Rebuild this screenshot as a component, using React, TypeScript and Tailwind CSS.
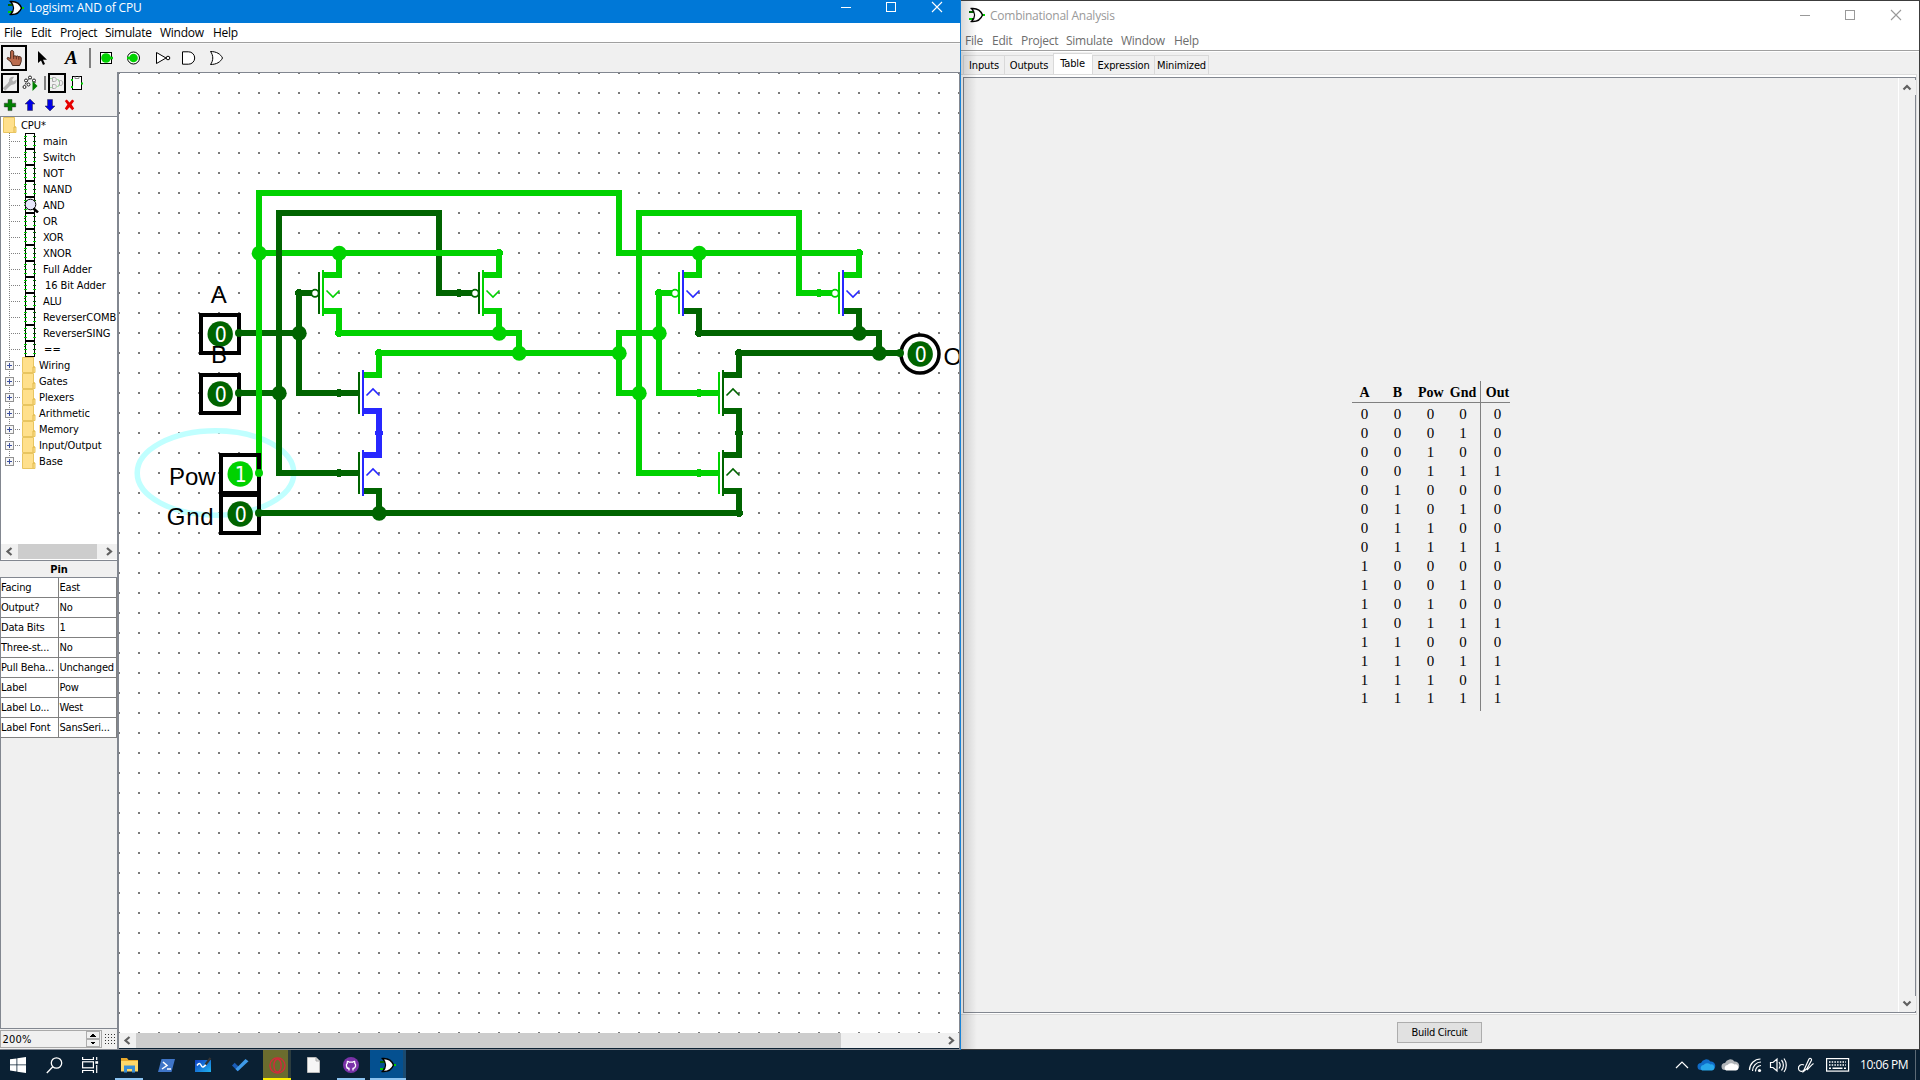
import React from "react";

const LIGHT = "#00d200";
const DARK = "#006400";
const BLUE = "#2828ff";

const UI = "font-['DejaVu_Sans_Condensed','DejaVu_Sans',sans-serif] text-[11px]";
const SEGOE = "font-['Open_Sans',sans-serif] text-[12px]";

/* ---------- shared pieces ---------- */

function LogisimIcon({ fill }: { fill: string }) {
  return (
    <svg width="18" height="16" viewBox="0 0 18 16" className="shrink-0">
      <path d="M1 5h5M1 12h5" stroke={DARK} strokeWidth="2" />
      <path d="M1 12h3M14 8h3" stroke={LIGHT} strokeWidth="2" />
      <path d="M3.5 1.5C10 1 13 4 14.5 8C13 12 10 15 3.5 14.5C7.5 10.5 7.5 5.5 3.5 1.5Z" fill={fill} stroke="#000" strokeWidth="1.4" />
    </svg>
  );
}

function WindowControls({ color }: { color: string }) {
  return (
    <svg width="102" height="12" viewBox="0 0 102 12" fill="none" stroke={color} shapeRendering="crispEdges">
      <path d="M0 6.5h10" />
      <rect x="45.5" y="1.5" width="9" height="9" />
      <path d="M91 1l10 10M101 1l-10 10" shapeRendering="auto" strokeWidth="1.1" />
    </svg>
  );
}

function MenuBar() {
  return (
    <>
      <span className="w-[27px]">File</span>
      <span className="w-[29px]">Edit</span>
      <span className="w-[45px]">Project</span>
      <span className="w-[55px]">Simulate</span>
      <span className="w-[53px]">Window</span>
      <span>Help</span>
    </>
  );
}

function Chevron({ dir }: { dir: "left" | "right" | "up" | "down" }) {
  const d = {
    left: "M10.5 4L6.5 7.5L10.5 11",
    right: "M7 4L11 7.5L7 11",
    up: "M4.5 9.5L8 6L11.5 9.5",
    down: "M4.5 5.5L8 9L11.5 5.5",
  }[dir];
  return (
    <svg width="17" height="15" viewBox="0 0 17 15" className="shrink-0 bg-[#f0f0f0]">
      <path d={d} fill="none" stroke="#606060" strokeWidth="2.2" />
    </svg>
  );
}

/* ---------- toolbars ---------- */

function MainToolbar() {
  return (
    <div className="flex h-7 items-center bg-[#f0f0f0] pl-px">
      <div className="flex h-[26px] w-[26px] items-center justify-center border-2 border-black">
        <svg width="17" height="18" viewBox="0 0 17 18">
          <path d="M6 1.5c1.3 0 1.7 1 1.7 2v4l1-.8 1.6.6 1-.4 1.5.8 1-.2 1.4 1v4l-1.5 4H6.5L5 13 1 9.8 1.6 8.4l3 1V3c0-1 .4-1.500 1.400-1.500Z" fill="#bb6c4e" stroke="#3c1c10" strokeWidth=".9" />
          <path d="M7.700 7v3M10.300 7.300v3M12.800 7.700v3" stroke="#3c1c10" strokeWidth=".8" />
        </svg>
      </div>
      <svg width="13" height="18" viewBox="0 0 13 18" className="ml-[9px]">
        <path d="M2 2v12l3-2.500 2 4.500 2-.9-2-4.300h4Z" fill="#000" />
      </svg>
      <span className="ml-[16px] w-[21px] font-['Liberation_Serif',serif] text-[19px] font-bold italic leading-[28px]">A</span>
      <span className="ml-[3px] h-5 w-[2px] bg-[#808080]" />
      <svg width="140" height="18" viewBox="91 49 140 18" fill="none" stroke="#000">
        <rect x="100.500" y="52.500" width="11" height="11" fill="#fff" />
        <circle cx="106" cy="58" r="4.800" fill={LIGHT} stroke="none" />
        <path d="M110 58h3" stroke={LIGHT} strokeWidth="2.500" />
        <circle cx="133.500" cy="58" r="6" fill="#fff" />
        <circle cx="133.500" cy="58" r="4.300" fill={LIGHT} stroke="none" />
        <path d="M127 58h3" stroke={LIGHT} strokeWidth="2.500" />
        <path d="M156.500 52.500v11L166 58Z" fill="#fff" />
        <circle cx="168" cy="58" r="1.800" fill="#fff" />
        <path d="M182.500 51.800v12.400h6a6.200 6.200 0 0 0 0-12.400Z" fill="#fff" />
        <path d="M210.500 51.500c6 0 10 2.500 12 6.500c-2 4-6 6.500-12 6.500c3-4 3-9 0-13Z" fill="#fff" />
      </svg>
    </div>
  );
}

function ExplorerToolbars() {
  return (
    <div className="flex h-[43px] flex-col">
      <div className="flex h-[21px] items-start pl-px">
        <div className="flex h-[20px] w-[18px] items-center justify-center border-2 border-black">
          <svg width="14" height="15" viewBox="0 0 14 15" className="shrink-0">
            <path d="M1 13.500L7 7.500" stroke="#b0b0b0" strokeWidth="3.400" />
            <path d="M13.500 3.500L10.500 5.500 9 4 11 1C8 .3 5.500 2.500 6 5.500L5 7 7.500 9.500l1.500-.8C12 9 14.200 6.500 13.500 3.500Z" fill="#b0b0b0" />
          </svg>
        </div>
        <svg width="18" height="18" viewBox="21 74 18 18" className="ml-[2px] mt-px shrink-0" fill="#fff" stroke="#222">
          <path d="M25 84.500L30 77.500L35.500 83" fill="none" strokeDasharray="2 1" />
          <circle cx="30" cy="77.500" r="1.500" />
          <circle cx="26" cy="80.500" r="1.500" />
          <circle cx="34" cy="80.500" r="1.500" />
          <circle cx="24.500" cy="87" r="1.500" />
          <circle cx="28.500" cy="84.500" r="1.500" />
          <path d="M32.500 81v10l5-5Z" fill="#008000" stroke="none" />
        </svg>
        <span className="ml-[5px] mt-[3px] h-[14px] w-[2px] shrink-0 bg-[#808080]" />
        <div className="ml-[2px] flex h-[20px] w-[18px] shrink-0 items-center justify-center border-2 border-black">
          <svg width="14" height="16" viewBox="0 0 14 16" fill="none" stroke="#a8a8a8" className="shrink-0">
            <path d="M2.500 2.500h2c2.500 0 2.500 4 0 4h-2ZM2.500 9.500h2c2.500 0 2.500 4 0 4h-2ZM9.500 5.500h1c3 0 3 5 0 5h-1Z" />
            <path d="M7 4.500h1.500v2M7 11.500h1.500v-2M0 3.500h2M0 12.500h2" stroke="#a0e0a0" />
          </svg>
        </div>
        <svg width="14" height="18" viewBox="71 74 14 18" className="ml-[4px] mt-px shrink-0">
          <rect x="73.500" y="76.500" width="9" height="13" fill="#fff" stroke="#000" />
          <path d="M76 76.500v2h4v-2" fill="none" stroke="#888" />
          <path d="M72 80h2M72 87h2M82 83.500h2" stroke={LIGHT} strokeWidth="2" />
        </svg>
      </div>
      <svg width="80" height="22" viewBox="0 94 80 22" stroke="#333" strokeWidth=".5">
        <path d="M8 99.500h4v3.700h3.700v3.700H12v3.700H8v-3.700H4.300v-3.700H8Z" fill="#008000" />
        <path d="M30 99l5 5h-2.500v6.500h-5V104H25Z" fill="#0000e6" />
        <path d="M50 111l5-5h-2.500v-6.500h-5v6.500H45Z" fill="#0000e6" />
        <path d="M64.800 101l2-1.500 2.700 3 2.700-3 2 1.500-2.600 3.600 2.600 3.900-2 1.700-2.700-3-2.700 3-2-1.700 2.600-3.900Z" fill="#e60000" stroke="none" />
      </svg>
    </div>
  );
}

/* ---------- explorer tree ---------- */

const circuits = ["main", "Switch", "NOT", "NAND", "AND", "OR", "XOR", "XNOR", "Full Adder", "16 Bit Adder", "ALU", "ReverserCOMB", "ReverserSING", "=="];
const libraries = ["Wiring", "Gates", "Plexers", "Arithmetic", "Memory", "Input/Output", "Base"];

function Folder() {
  return (
    <svg width="14" height="16" viewBox="0 0 14 16" className="shrink-0">
      <path d="M.5.500h11v9.500h1.500v5.500H.5Z" fill="#ffe08c" stroke="#e8c560" />
      <path d="M11 15v-5h2" fill="none" stroke="#e0b84a" />
    </svg>
  );
}

function CircuitRow({ name, current }: { name: string; current: boolean }) {
  return (
    <div className="flex h-4 items-center">
      <svg width="42" height="16" viewBox="1 0 42 16" className="shrink-0" shapeRendering="crispEdges">
        <path d="M9.500 0v16" stroke="#808080" strokeDasharray="1 1" />
        <path d="M11 8.500h10" stroke="#808080" strokeDasharray="1 1" />
        <path d="M25.500.5h9v14.500h-9Z" fill="#fff" stroke="#000" />
        <path d="M24 3.500h3M24 8.500h3M24 12.500h3M33 12.500h3" stroke={LIGHT} />
        <path d="M33 3.500h3M33 8.500h3M24 5.500h2" stroke={DARK} />
        {current && (
          <g shapeRendering="auto">
            <circle cx="30.500" cy="7.500" r="5.300" fill="#e6e6fa" stroke="#000" />
            <path d="M33.500 11.500l4.500 4" stroke="#000" strokeWidth="2.500" />
          </g>
        )}
      </svg>
      <span className={name === "16 Bit Adder" ? "ml-[2px] whitespace-nowrap pt-[2px]" : name === "==" ? "ml-px pt-[2px] tracking-[0.200px]" : "whitespace-nowrap pt-[2px]"}>{name}</span>
    </div>
  );
}

function Tree() {
  return (
    <div className="flex h-[445px] flex-col border-b border-l border-t border-[#828790] bg-white">
      <div className={`flex h-[427px] flex-col overflow-hidden text-black ${UI} leading-[16px] tracking-[-0.060px]`}>
        <div className="flex h-4 items-center pl-[2px]">
          <Folder />
          <span className="ml-[4px] pt-[2px]">CPU*</span>
        </div>
        {circuits.map((c) => (
          <CircuitRow key={c} name={c} current={c === "AND"} />
        ))}
        {libraries.map((l, i) => (
          <div key={l} className="flex h-4 items-center">
            <svg width="21" height="16" viewBox="1 0 21 16" className="shrink-0" shapeRendering="crispEdges">
              <path d={i === libraries.length - 1 ? "M9.500 0v4" : "M9.500 0v16"} stroke="#808080" strokeDasharray="1 1" />
              <path d="M15 8.500h6" stroke="#808080" strokeDasharray="1 1" />
              <rect x="5.500" y="4.500" width="8" height="8" fill="#f6f6f6" stroke="#919191" />
              <path d="M7 8.500h5M9.500 6v5" stroke="#3c50a0" />
            </svg>
            <Folder />
            <span className="ml-[3px] whitespace-nowrap pt-[2px]">{l}</span>
          </div>
        ))}
      </div>
      <div className="flex h-[15px] bg-[#f0f0f0]">
        <Chevron dir="left" />
        <div className="h-full w-[79px] bg-[#cdcdcd]" />
        <div className="flex-1" />
        <Chevron dir="right" />
      </div>
    </div>
  );
}

const attributes = [
  ["Facing", "East"],
  ["Output?", "No"],
  ["Data Bits", "1"],
  ["Three-st...", "No"],
  ["Pull Beha...", "Unchanged"],
  ["Label", "Pow"],
  ["Label Lo...", "West"],
  ["Label Font", "SansSeri..."],
];

function Attributes() {
  return (
    <div className="flex flex-1 flex-col bg-[#f0f0f0]">
      <div className={`h-4 pl-px text-center font-bold text-black ${UI} leading-[18px] tracking-[-0.100px]`}>Pin</div>
      <div className={`flex-1 border-b border-l border-t border-[#828790] text-black ${UI} tracking-[-0.200px]`}>
        {attributes.map(([k, v]) => (
          <div key={k} className="flex h-5 whitespace-nowrap border-b border-[#808080] bg-white leading-[20px]">
            <span className="w-[58px] border-r border-[#808080]">{k}</span>
            <span className="w-[58px] border-r border-[#808080] pl-[0.500px]">{v}</span>
          </div>
        ))}
      </div>
    </div>
  );
}

function ZoomControl() {
  return (
    <div className="flex h-5 items-center bg-[#f0f0f0]">
      <div className={`flex h-[18px] w-[102px] items-center border border-[#a9a9a9] bg-[#f0f0f0] pl-[1.500px] text-black ${UI}`}>
        <span className="flex-1 pt-[2px] tracking-[0.2px]">200%</span>
        <div className="flex h-4 w-[15px] flex-col">
          <svg width="15" height="16" viewBox="0 0 15 16" shapeRendering="crispEdges">
            <rect x=".5" y=".5" width="13" height="7" fill="#f0f0f0" stroke="#adadad" />
            <rect x=".5" y="8.500" width="13" height="7" fill="#f0f0f0" stroke="#adadad" />
            <path d="M4.500 5.500h5.500L7.200 2.500ZM4.500 10.500h5.500L7.200 13.500Z" fill="#000" />
          </svg>
        </div>
      </div>
      <svg width="12" height="13" viewBox="0 0 12 13" className="ml-[2px]" shapeRendering="crispEdges" stroke="#333" strokeDasharray="1 2">
        <path d="M1 1.500h11M1 4.500h11M1 7.500h11M1 10.500h11" />
      </svg>
    </div>
  );
}

/* ---------- circuit canvas ---------- */

type Fet = { x: number; y: number; p: boolean; gate: string; chan: string; top: string; bottom: string };

function Transistor({ x, y, p, gate, chan, top, bottom }: Fet) {
  return (
    <g fill="none" shapeRendering="crispEdges">
      <path d={`M${x - 15} ${y - 18}H${x}V${y - 40}`} stroke={top} strokeWidth="6" />
      <path d={`M${x - 15} ${y + 18}H${x}V${y + 40}`} stroke={bottom} strokeWidth="6" />
      <path d={`M${x - 40} ${y}H${p ? x - 27 : x - 20}`} stroke={gate} strokeWidth="6" />
      <path d={`M${x - 20} ${y - 21}v42`} stroke={gate} strokeWidth="2" />
      <path d={`M${x - 16} ${y - 23}v46`} stroke={chan} strokeWidth="2" />
      {p && <circle cx={x - 24} cy={y + 0.3} r="3.6" fill="#fff" stroke={gate} strokeWidth="1.7" shapeRendering="auto" />}
      <path
        d={p ? `M${x - 12.500} ${y - 2.500}l6.500 6.500l6.500 -6.500` : `M${x - 12.500} ${y + 2.500}l6.500 -6.500l6.500 6.500`}
        stroke={chan}
        strokeWidth="1.6"
        shapeRendering="auto"
      />
      <circle cx={x - 40} cy={y} r="3.800" fill={gate} />
      <circle cx={x} cy={y - 40} r="3.800" fill={top} />
      <circle cx={x} cy={y + 40} r="3.800" fill={bottom} />
    </g>
  );
}

const fets: Fet[] = [
  { x: 339, y: 293, p: true, gate: DARK, chan: LIGHT, top: LIGHT, bottom: LIGHT },
  { x: 499, y: 293, p: true, gate: DARK, chan: LIGHT, top: LIGHT, bottom: LIGHT },
  { x: 379, y: 393, p: false, gate: DARK, chan: BLUE, top: LIGHT, bottom: BLUE },
  { x: 379, y: 473, p: false, gate: DARK, chan: BLUE, top: BLUE, bottom: DARK },
  { x: 699, y: 293, p: true, gate: LIGHT, chan: BLUE, top: LIGHT, bottom: DARK },
  { x: 859, y: 293, p: true, gate: LIGHT, chan: BLUE, top: LIGHT, bottom: DARK },
  { x: 739, y: 393, p: false, gate: LIGHT, chan: DARK, top: DARK, bottom: DARK },
  { x: 739, y: 473, p: false, gate: LIGHT, chan: DARK, top: DARK, bottom: DARK },
];

const darkWires = "M239 333H299M299 290V393H339M239 393H279M339 473H279V213H439V293H459M699 333H879V353M739 353H899M259 513H739";
const lightWires =
  "M259 473V193H619V253H859M259 253H499M339 333H519V353M379 353H619M659 333H619V393H639M659 290V393H699M699 473H639V213H799V293H819";
const lightJunctions = [[259, 253], [339, 253], [499, 333], [519, 353], [619, 353], [659, 333], [639, 393], [699, 253]];
const darkJunctions = [[299, 333], [279, 393], [379, 513], [859, 333], [879, 353]];

function PinValue({ x, y, v }: { x: number; y: number; v: string }) {
  return (
    <>
      <circle cx={x + 0.2} cy={y} r="12.700" fill={v === "1" ? LIGHT : DARK} />
      <text x={x + 0.7} y={y + 8} textAnchor="middle" fontSize="21" fill="#fff" className="font-['DejaVu_Sans_Condensed','DejaVu_Sans',sans-serif]">
        {v}
      </text>
    </>
  );
}

function InputPin({ x, y, v }: { x: number; y: number; v: string }) {
  return (
    <g>
      <rect x={x - 19} y={y - 19} width="38" height="38" fill="none" stroke="#000" strokeWidth="4" shapeRendering="crispEdges" />
      <PinValue x={x} y={y} v={v} />
      <circle cx={x + 19} cy={y - 1} r="4" fill={v === "1" ? LIGHT : DARK} />
    </g>
  );
}

function Circuit() {
  return (
    <svg width="840" height="960" viewBox="119 73 840 960" className="block">
      <defs>
        <pattern id="grid" x="118" y="72" width="20" height="20" patternUnits="userSpaceOnUse">
          <rect width="2" height="2" fill="#7a7a7a" />
        </pattern>
      </defs>
      <rect x="119" y="73" width="840" height="960" fill="#fff" />
      <rect x="119" y="73" width="840" height="960" fill="url(#grid)" shapeRendering="crispEdges" />
      <ellipse cx="215.500" cy="473" rx="78.300" ry="42.200" fill="none" stroke="#c0ffff" strokeWidth="5.500" />
      <g fill="none" strokeWidth="6" shapeRendering="crispEdges">
        <path d={darkWires} stroke={DARK} />
        <path d={lightWires} stroke={LIGHT} />
      </g>
      {/* The feed to the second gate passes above the bright drain wire */}
      <path d="M279 245V261" stroke={DARK} strokeWidth="6" />
      {fets.map((f) => (
        <Transistor key={`${f.x}-${f.y}`} {...f} />
      ))}
      <g>
        {lightJunctions.map(([x, y]) => (
          <circle key={`${x}-${y}`} cx={x + 0.2} cy={y + 0.3} r="7.500" fill={LIGHT} />
        ))}
        {darkJunctions.map(([x, y]) => (
          <circle key={`${x}-${y}`} cx={x + 0.2} cy={y + 0.3} r="7.500" fill={DARK} />
        ))}
      </g>
      <InputPin x={220} y={334} v="0" />
      <InputPin x={220} y={394} v="0" />
      <InputPin x={240} y={474} v="1" />
      <InputPin x={240} y={514} v="0" />
      <circle cx="920" cy="354" r="19" fill="#fff" stroke="#000" strokeWidth="3.500" />
      <PinValue x={920} y={354} v="0" />
      <circle cx="900" cy="353" r="4" fill={DARK} />
      <g className="font-['Liberation_Sans',Arial,sans-serif]" fontSize="24" fill="#000">
        <text x="218.700" y="303" textAnchor="middle">A</text>
        <text x="219" y="362.500" textAnchor="middle">B</text>
        <text x="169" y="484.500" textLength="46.500">Pow</text>
        <text x="166.700" y="525" textLength="47">Gnd</text>
        <text x="943.500" y="365">Out</text>
      </g>
    </svg>
  );
}

function LogisimWindow() {
  return (
    <div className="flex h-full w-[961px] flex-col border-r border-[#1883d7]">
      <div className="flex h-[23px] items-start bg-[#0078d7]">
        <div className="flex h-[15px] flex-1 items-center pl-[7px]">
          <LogisimIcon fill="#fff" />
          <span className={`ml-1 text-white ${SEGOE} tracking-[-0.150px]`}>Logisim: AND of CPU</span>
        </div>
        <div className="mr-[17px] mt-px">
          <WindowControls color="#fff" />
        </div>
      </div>
      <div className={`flex h-[19px] items-center bg-white pl-1 text-black ${SEGOE} leading-[18px] tracking-[-0.250px]`}>
        <MenuBar />
      </div>
      <div className="h-[2px] border-t border-[#a0a0a0] bg-[#f8f8f8]" />
      <MainToolbar />
      <div className="flex min-h-0 flex-1 border-b border-[#828790]">
        <div className="flex w-[119px] flex-col border-r-2 border-[#828790] bg-[#f0f0f0]">
          <div className="h-px" />
          <ExplorerToolbars />
          <Tree />
          <Attributes />
          <ZoomControl />
        </div>
        <div className="flex flex-1 flex-col border-r border-t border-[#828790]">
          <Circuit />
          <div className="flex h-[15px] bg-[#f0f0f0]">
            <Chevron dir="left" />
            <div className="h-full w-[705px] bg-[#cdcdcd]" />
            <div className="flex-1" />
            <Chevron dir="right" />
          </div>
        </div>
      </div>
    </div>
  );
}

/* ---------- combinational analysis ---------- */

const outputs = [0, 0, 0, 1, 0, 0, 0, 1, 0, 0, 0, 1, 0, 1, 1, 1];
const truthRows = outputs.map((out, n) => [(n >> 3) & 1, (n >> 2) & 1, (n >> 1) & 1, n & 1, out]);

function TruthCells({ cells }: { cells: (string | number)[] }) {
  return (
    <>
      <span className="w-[25px] shrink-0 text-center">{cells[0]}</span>
      <span className="ml-2 w-[25px] shrink-0 text-center">{cells[1]}</span>
      <span className="ml-2 w-[25px] shrink-0 text-center">{cells[2]}</span>
      <span className="ml-[5px] w-[30px] shrink-0 text-center">{cells[3]}</span>
      <span className="ml-[2px] h-full w-px shrink-0 bg-[#808080]" />
      <span className="ml-px w-[31px] shrink-0 text-center">{cells[4]}</span>
    </>
  );
}

function TruthTable() {
  return (
    <div className="flex w-[158px] flex-col font-['Liberation_Serif',serif] text-[15px] text-black">
      <div className="flex h-[22px] border-b border-[#808080] text-[14px] font-bold leading-[23px]">
        <TruthCells cells={["A", "B", "Pow", "Gnd", "Out"]} />
      </div>
      {truthRows.map((r, i) => (
        <div key={i} className={i === 0 ? "flex h-[20px] items-end leading-[17px]" : i === 15 ? "flex h-[22px] leading-[19px]" : "flex h-[19px] items-end leading-[18px]"}>
          <TruthCells cells={r} />
        </div>
      ))}
    </div>
  );
}

function AnalysisWindow() {
  return (
    <div className="relative flex h-full flex-1 flex-col border-b border-r border-t border-[#3c3c3c] bg-[#f0f0f0]">
      <div className="flex h-[26px] items-start bg-white pl-[7px]">
        <div className="mt-[6px]">
          <LogisimIcon fill="#fff" />
        </div>
        <span className={`ml-1 mt-[6px] flex-1 leading-[18px] text-[#999] ${SEGOE} tracking-[-0.250px]`}>Combinational Analysis</span>
        <div className="mr-[17px] mt-2">
          <WindowControls color="#999" />
        </div>
      </div>
      <div className={`flex h-[23px] bg-white pl-1 pt-[5px] text-[#6d6d6d] ${SEGOE} leading-[18px] tracking-[-0.250px]`}>
        <MenuBar />
      </div>
      <div className="h-[2px] border-t border-[#a0a0a0] bg-white" />
      <div className={`flex h-[22px] items-end pl-[2px] text-center text-black ${UI} leading-[20px] tracking-[-0.150px]`}>
        <span className="h-[19px] w-[41px] border-l border-t border-[#d9d9d9]">Inputs</span>
        <span className="h-[19px] w-[49px] border-l border-t border-[#d9d9d9]">Outputs</span>
        <span className="h-[21px] w-[39px] border-l border-t border-[#d9d9d9] bg-white pr-px leading-[19px]">Table</span>
        <span className="h-[19px] w-[62px] border-l border-t border-[#d9d9d9]">Expression</span>
        <span className="h-[19px] w-[55px] border-x border-t border-[#d9d9d9]">Minimized</span>
      </div>
      <div className="mr-[2px] flex flex-1 flex-col border-b border-r border-t border-[#dcdcdc] bg-white pb-px pl-[2px] pt-[2px]">
        <div className="flex flex-1 border border-[#828790] bg-[#f0f0f0]">
          <div className="flex flex-1 justify-center pt-[303px]">
            <TruthTable />
          </div>
          <div className="flex w-[17px] flex-col justify-between border-l border-white pb-px pt-[2px]">
            <Chevron dir="up" />
            <Chevron dir="down" />
          </div>
        </div>
      </div>
      <div className="flex h-[34px] items-start pl-[436px] pt-[7px]">
        <div className={`h-[21px] w-[85px] border border-[#adadad] bg-[#e1e1e1] text-center text-black ${UI} leading-[19px] tracking-[-0.300px]`}>Build Circuit</div>
      </div>
      {/* Shadow cast by the focused window */}
      <div className="pointer-events-none absolute inset-y-0 left-0 w-[16px] bg-gradient-to-r from-black/15 to-transparent" />
    </div>
  );
}

/* ---------- taskbar ---------- */

function Cell({ children, className = "" }: { children: React.ReactNode; className?: string }) {
  return <div className={`flex h-full items-center justify-center ${className}`}>{children}</div>;
}

function Taskbar() {
  return (
    <div className="flex h-[30px] bg-[#0a2033]">
      <Cell className="w-9">
        <svg width="16" height="16" viewBox="0 0 16 16" fill="#fff">
          <path d="M0 2.300L6.500 1.400V7.500H0ZM7.300 1.300L16 0V7.500H7.300ZM0 8.300H6.500V14.500L0 13.600ZM7.300 8.300H16V16L7.300 14.700Z" />
        </svg>
      </Cell>
      <Cell className="w-9">
        <svg width="17" height="17" viewBox="0 0 17 17" fill="none" stroke="#fff" strokeWidth="1.300">
          <circle cx="10.500" cy="6" r="5.200" />
          <path d="M6.800 9.800L.8 16" />
        </svg>
      </Cell>
      <Cell className="w-9">
        <svg width="17" height="16" viewBox="0 0 17 16" fill="none" stroke="#fff" strokeWidth="1.200">
          <path d="M.6 0v2.500h10.800V0M.6 16v-2.500h10.800V16" />
          <rect x=".6" y="4.800" width="10.800" height="6" />
          <path d="M14.700 0v3M14.700 8v8" />
          <path d="M13.300 5.500h2.800" strokeWidth="2.600" />
        </svg>
      </Cell>
      <div className="flex h-full w-[42px] items-end justify-center">
        <div className="flex h-full w-7 flex-col items-center justify-between border-b-2 border-[#8cc3f0]">
          <svg width="17" height="16" viewBox="0 0 17 16" className="mt-[7px]">
            <path d="M0 1h6l1.500 2H17v11H0Z" fill="#e8a92c" />
            <path d="M0 4h17v10.500H0Z" fill="#ffd869" />
            <path d="M3 15.500v-7h11v7h-3v-3.500H6v3.500Z" fill="#3a8fd6" />
          </svg>
        </div>
      </div>
      <Cell className="w-8">
        <svg width="17" height="13" viewBox="0 0 17 13">
          <path d="M3.500 0H17l-3.500 13H0Z" fill="#3f75c8" />
          <path d="M5 3l4 3.500-5 3.500M9 10h4" fill="none" stroke="#fff" strokeWidth="1.500" />
        </svg>
      </Cell>
      <Cell className="w-[42px]">
        <svg width="17" height="16" viewBox="0 0 17 16">
          <defs>
            <linearGradient id="wb" x1="0" y1="0" x2="1" y2="1">
              <stop offset="0" stopColor="#0f3cc0" />
              <stop offset="1" stopColor="#1fb4f0" />
            </linearGradient>
          </defs>
          <rect y="3" width="16" height="12" fill="url(#wb)" />
          <path d="M2 8.500c2.500-3.500 3.500-1.500 4.500.5s3 .5 4.500-1.500" fill="none" stroke="#fff" strokeWidth="1.500" />
          <path d="M10.500 7.500L15.500 1" stroke="#333" strokeWidth="2.200" />
        </svg>
      </Cell>
      <Cell className="w-[32px]">
        <svg width="17" height="13" viewBox="0 0 17 13" className="mt-px">
          <path d="M0 6.500L2.700 3.800 8.500 9.500 5.700 12.300Z" fill="#1a5cb8" />
          <path d="M5.700 12.300L3.500 9.900 13.500 0 16.500 2.300Z" fill="#3f9ae8" />
        </svg>
      </Cell>
      <div className="ml-[7px] flex h-full w-7 border-b-2 border-[#fff000] bg-[#2c3c3e]">
        <div className="flex h-full w-[25px] items-center justify-center bg-[#6b6c2e] pl-[3px] pt-[2px]">
          <svg width="17" height="17" viewBox="0 0 17 17" fill="none" stroke="#d8273c" strokeWidth="1.300">
            <circle cx="8.500" cy="8.500" r="7.600" />
            <ellipse cx="8.500" cy="8.500" rx="3.600" ry="6.500" />
          </svg>
        </div>
      </div>
      <Cell className="w-[45px]">
        <svg width="13" height="16" viewBox="0 0 13 16">
          <path d="M.5.5h8.500l3.500 3.500v11.500H.5Z" fill="#f6f6f6" stroke="#bcbcbc" />
          <path d="M9 .5v3.500h3.500" fill="#ddd" stroke="#aaa" />
        </svg>
      </Cell>
      <div className="ml-px flex h-full w-7 flex-col items-center border-b-2 border-[#8cc3f0]">
        <svg width="16" height="16" viewBox="0 0 16 16" className="mt-[7px]">
          <circle cx="8" cy="8" r="8" fill="#7a32a8" />
          <path d="M6 13.500v-2c-1.500.3-2.200-.5-2.600-1.300M6 11.500c-3-.5-3.200-4-1.700-5.300-.2-.8 0-1.600.2-1.900.9 0 1.500.5 2 .9.900-.2 2.100-.2 3 0 .500-.4 1.100-.9 2-.9.2.3.400 1.100.2 1.900C13.200 7.500 13 11 10 11.500v2" fill="none" stroke="#fff" strokeWidth="1.300" />
        </svg>
      </div>
      <div className="ml-[5px] flex h-full w-[36px] border-b-2 border-[#8cc3f0] bg-[#1a4a70]">
        <div className="flex h-full w-[33px] items-center justify-center bg-[#045090] pl-[3px] pt-[2px]">
          <LogisimIcon fill="#fff" />
        </div>
      </div>
      <div className="flex-1" />
      <svg width="180" height="30" viewBox="1670 1050 180 30" fill="none" stroke="#fff" strokeWidth="1.200">
        <path d="M1676 1068l6-6l6 6" />
        <path d="M1701 1070a3.500 3.500 0 0 1 0-7a5.500 5.500 0 0 1 9.500-1.500a4 4 0 0 1 1 8.500Z" fill="#0f6cc8" stroke="none" />
        <path d="M1702 1070.500a3 3 0 0 1 1.500-5.500a5 5 0 0 1 7-.5a3 3 0 0 1 1.500 6Z" fill="#28a8ea" stroke="none" />
        <path d="M1725 1070a3.500 3.500 0 0 1 0-7a5.500 5.500 0 0 1 9.500-1.500a4 4 0 0 1 1 8.500Z" fill="#b0b4b8" stroke="none" />
        <path d="M1726 1070.500a3 3 0 0 1 1.500-5.500a5 5 0 0 1 7-.5a3 3 0 0 1 1.500 6Z" fill="#fff" stroke="none" />
        <path d="M1749.500 1070c0-6 5-11 11-11M1752.500 1071c0-5 4-9 8.500-9M1755.500 1071.500c0-3.500 2.500-6 5.500-6" />
        <circle cx="1759.500" cy="1070.500" r="1.600" fill="#fff" stroke="none" />
        <path d="M1770.500 1062.500h2.500l4-3.500v12l-4-3.500h-2.500ZM1779 1062c1.500 2 1.500 4.500 0 6.500M1781.500 1060c2.500 3 2.500 7.500 0 10.500M1784 1058.500c3 4 3 9.500 0 13.500" />
        <path d="M1804 1070l5-11c.8-1.300 3-.5 2.500 1.200l-4.500 8.300-3.500 3ZM1804 1065c-3-1.500-6 1-5.500 4s4.500 3 5.500 1M1807 1070c2-1.500 4-5 6.500-6.500" />
        <rect x="1826.600" y="1058.600" width="22" height="12.500" />
        <path d="M1829 1062h17M1829 1065h17" strokeDasharray="1.500 1.200" strokeWidth="1.400" />
        <path d="M1829 1068.200h2M1832.500 1068.200h10M1844 1068.200h2" strokeWidth="1.400" />
      </svg>
      <span className={`ml-[10px] w-[55px] whitespace-nowrap leading-[30px] text-white ${SEGOE} tracking-[-0.450px]`}>10:06 PM</span>
      <div className="w-[5px] border-l border-[#5c6a76]" />
    </div>
  );
}

export default function App() {
  return (
    <div className="flex h-[1080px] w-[1920px] flex-col overflow-hidden bg-[#0a2033]">
      <div className="flex h-[1050px]">
        <LogisimWindow />
        <AnalysisWindow />
      </div>
      <Taskbar />
    </div>
  );
}
